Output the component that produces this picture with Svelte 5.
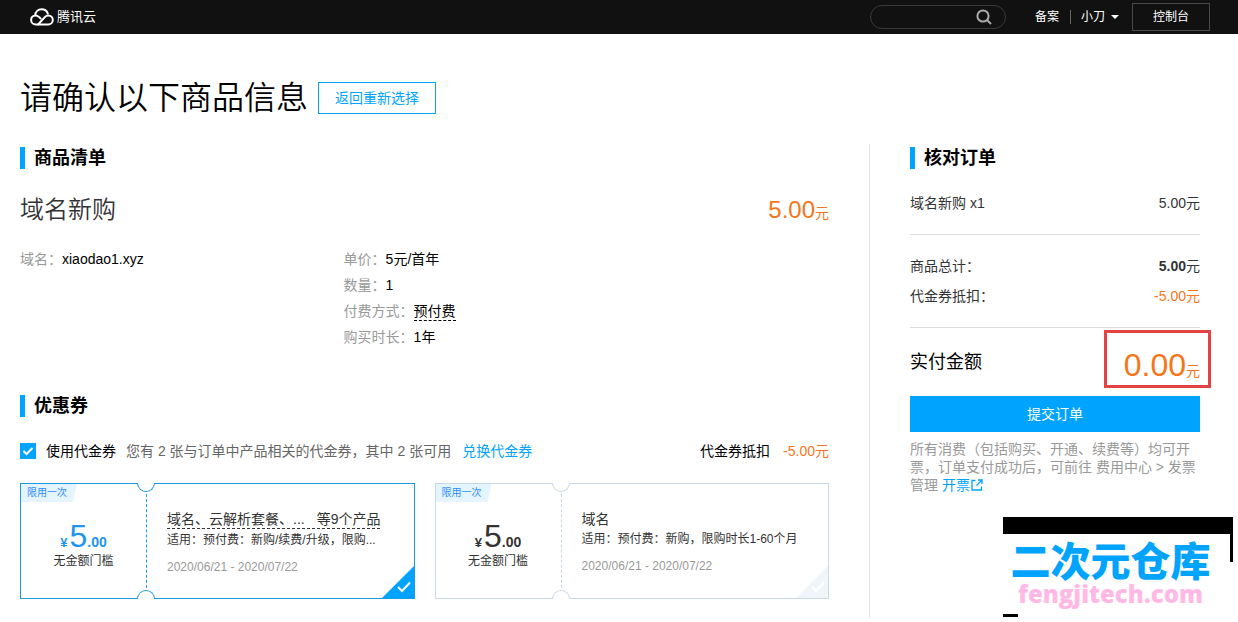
<script>
  let query = $state('');
  let useVoucher = $state(true);
  let selected = $state(0);

  const details = [
    { label: '单价', value: '5元/首年' },
    { label: '数量', value: '1' },
    { label: '付费方式', value: '预付费', hint: true },
    { label: '购买时长', value: '1年' },
  ];

  const coupons = [
    {
      names: '域名、云解析套餐、...',
      more: '等9个产品',
      scope: '适用：预付费：新购/续费/升级，限购...',
      dates: '2020/06/21 - 2020/07/22',
    },
    {
      names: '域名',
      scope: '适用：预付费：新购，限购时长1-60个月',
      dates: '2020/06/21 - 2020/07/22',
    },
  ];
</script>

<header class="topbar">
  <a class="logo" href="#home">
    <svg width="24" height="18" viewBox="0 0 24 18" fill="none" stroke="#fff" stroke-width="2" stroke-linecap="round" stroke-linejoin="round">
      <path d="M8.1 16.5 H5.8 C3 16.5 1.1 14.4 1.1 12 C1.1 9.5 3 7.5 5.4 7.5 C6.9 7.5 8 8 9.1 9.1 L10.6 10.5" />
      <path d="M5.3 7.2 C5.3 3.7 8.2 1.2 11.6 1.2 C14.6 1.2 17 3 17.8 5.6" />
      <path d="M8.1 16.5 H18.2 C20.8 16.5 22.8 14.4 22.8 12 C22.8 9.5 20.8 7.5 18.3 7.5 C16.9 7.5 15.8 8.1 14.8 9.1 L8.1 16.5" />
    </svg>
    <span>腾讯云</span>
  </a>
  <div class="search">
    <input type="text" aria-label="搜索" bind:value={query} />
    <button type="button" aria-label="搜索">
      <svg width="16" height="16" viewBox="0 0 16 16" fill="none" stroke="#aaa" stroke-width="2">
        <circle cx="7" cy="7" r="5.6" />
        <path d="M11 11 L15 15" />
      </svg>
    </button>
  </div>
  <a class="top-link" href="#beian">备案</a>
  <button type="button" class="user">小刀<span class="caret"></span></button>
  <a class="console" href="#console">控制台</a>
</header>

<div class="page">
  <div class="title-row">
    <h1>请确认以下商品信息</h1>
    <button type="button" class="back">返回重新选择</button>
  </div>

  <div class="columns">
    <main>
      <h2>商品清单</h2>
      <div class="product">
        <h3>域名新购</h3>
        <p class="price">5.00<small>元</small></p>
      </div>
      <div class="details">
        <p><span class="label">域名：</span>xiaodao1.xyz</p>
        <div>
          {#each details as item}
            <p>
              <span class="label">{item.label}：</span><span class:hint={item.hint}>{item.value}</span>
            </p>
          {/each}
        </div>
      </div>

      <h2>优惠券</h2>
      <div class="voucher-row">
        <label>
          <input type="checkbox" bind:checked={useVoucher} />
          使用代金券
        </label>
        <span class="voucher-tip">您有 2 张与订单中产品相关的代金券，其中 2 张可用</span>
        <a href="#exchange">兑换代金券</a>
        <p class="voucher-sum">代金券抵扣 <span class="orange">-5.00元</span></p>
      </div>
      <div class="coupons">
        {#each coupons as coupon, i}
          <button
            type="button"
            class="coupon"
            class:active={selected === i}
            aria-pressed={selected === i}
            onclick={() => (selected = i)}
          >
            <span class="tag">限用一次</span>
            <span class="amount">
              <span class="money"><b class="yen">¥</b><span class="big">5</span><b>.00</b></span>
              <span class="limit">无金额门槛</span>
            </span>
            <span class="info">
              {#if coupon.more}
                <span class="names multi"><span>{coupon.names}</span><span>{coupon.more}</span></span>
              {:else}
                <span class="names">{coupon.names}</span>
              {/if}
              <span class="scope">{coupon.scope}</span>
              <span class="dates">{coupon.dates}</span>
            </span>
            <span class="notch top"></span>
            <span class="notch bottom"></span>
            <svg class="corner" width="32" height="32" viewBox="0 0 32 32">
              <path class="corner-fill" d="M32 0 V32 H0 Z" />
              <path d="M16 21 L20 25 L28 16.5" fill="none" stroke="#fff" stroke-width="2" />
            </svg>
          </button>
        {/each}
      </div>
    </main>

    <aside>
      <h2>核对订单</h2>
      <dl class="lines first">
        <div><dt>域名新购 x1</dt><dd>5.00元</dd></div>
      </dl>
      <dl class="lines">
        <div><dt>商品总计：</dt><dd><b>5.00</b>元</dd></div>
        <div><dt>代金券抵扣：</dt><dd class="orange">-5.00元</dd></div>
      </dl>
      <div class="total">
        <span>实付金额</span>
        <span class="total-price">0.00<small>元</small></span>
      </div>
      <button type="button" class="submit">提交订单</button>
      <p class="note">
        所有消费（包括购买、开通、续费等）均可开票，订单支付成功后，可前往 费用中心 &gt; 发票管理
        <a href="#invoice">开票<svg width="12" height="12" viewBox="0 0 12 12" fill="none" stroke="currentColor" stroke-width="1.3">
            <path d="M4.5 1.5 H1 V11 H10.5 V7.5" />
            <path d="M7 1 H11 V5 M11 1 L5.5 6.5" />
          </svg></a>
      </p>
    </aside>
  </div>

  <div class="watermark">
    <span class="wm-name">二次元仓库</span>
    <span class="wm-site">fengjitech.com</span>
  </div>
</div>

<style>
  :global(body) {
    background: #fff;
    color: #000;
    font: 14px/20px "Liberation Sans", "Noto Sans CJK SC", sans-serif;
  }

  h1,
  h2,
  h3,
  p,
  dl,
  dd {
    margin: 0;
  }

  button,
  input {
    font: inherit;
    padding: 0;
    box-sizing: border-box;
  }

  button {
    cursor: pointer;
  }

  a {
    color: #00a4ff;
    text-decoration: none;
  }

  .orange {
    color: #f5761a;
  }

  /* Top bar */
  .topbar {
    display: flex;
    align-items: center;
    height: 34px;
    padding: 0 28px 0 30px;
    background: #111;
    color: #fff;
    font-size: 12px;
  }

  .logo {
    display: flex;
    align-items: center;
    gap: 3px;
    color: #fff;
    font-size: 13px;
  }

  .search {
    display: flex;
    align-items: center;
    box-sizing: border-box;
    width: 136px;
    height: 24px;
    margin-left: auto;
    padding: 0 13px;
    border: 1px solid #3a3a3a;
    border-radius: 12px;
  }

  .search input {
    flex: 1;
    min-width: 0;
    border: 0;
    outline: 0;
    background: none;
    color: #fff;
  }

  .search button {
    display: flex;
    border: 0;
    background: none;
  }

  .top-link {
    margin-left: 29px;
    padding-right: 11px;
    border-right: 1px solid #666;
    color: #fff;
    line-height: 14px;
  }

  .user {
    display: flex;
    align-items: center;
    gap: 6px;
    margin-left: 10px;
    border: 0;
    background: none;
    color: #fff;
  }

  .caret {
    border: 4px solid transparent;
    border-top-color: #fff;
    border-bottom: 0;
  }

  .console {
    box-sizing: border-box;
    width: 78px;
    height: 28px;
    margin-left: 13px;
    border: 1px solid #4a4a4a;
    color: #fff;
    line-height: 26px;
    text-align: center;
  }

  /* Page frame */
  .page {
    position: relative;
    padding: 40px 38px 4px 20px;
  }

  .title-row {
    display: flex;
    align-items: center;
    gap: 10px;
    height: 48px;
  }

  h1 {
    font-size: 32px;
    font-weight: 350;
    line-height: 50px;
  }

  .back {
    width: 118px;
    height: 32px;
    border: 1px solid #00a4ff;
    background: #fff;
    color: #00a4ff;
  }

  .columns {
    display: flex;
    margin-top: 22px;
  }

  main {
    flex: 1;
    min-width: 0;
    padding: 3px 40px 19px 0;
    border-right: 1px solid #e5e5e5;
  }

  aside {
    width: 290px;
    padding: 3px 0 0 40px;
  }

  h2 {
    padding-left: 9px;
    border-left: 5px solid #00a4ff;
    font-size: 18px;
    line-height: 22px;
  }

  /* Product */
  .product {
    display: flex;
    justify-content: space-between;
    margin-top: 21px;
    line-height: 40px;
  }

  h3 {
    color: #333;
    font-size: 24px;
    font-weight: 350;
  }

  .price {
    color: #f5761a;
    font-size: 24px;
  }

  small {
    font-size: 14px;
    line-height: 14px;
  }

  .details {
    display: grid;
    grid-template-columns: 2fr 3fr;
    margin: 16px 0 45px;
    line-height: 26px;
  }

  .label {
    color: #999;
  }

  .hint {
    padding-bottom: 1px;
    border-bottom: 1px dashed #000;
  }

  /* Vouchers */
  .voucher-row {
    display: flex;
    align-items: center;
    margin: 24px 0 22px;
  }

  .voucher-row label {
    display: flex;
    align-items: center;
    gap: 10px;
  }

  .voucher-row input {
    appearance: none;
    width: 16px;
    height: 16px;
    margin: 0;
    border: 1px solid #00a4ff;
  }

  .voucher-row input:checked {
    background: #00a4ff url("data:image/svg+xml,%3Csvg xmlns='http://www.w3.org/2000/svg' viewBox='0 0 14 14'%3E%3Cpath d='M2.5 7 L5.5 10 L11.5 4' fill='none' stroke='white' stroke-width='2'/%3E%3C/svg%3E");
  }

  .voucher-tip {
    margin: 0 11px 0 10px;
    color: #666;
  }

  .voucher-sum {
    display: flex;
    gap: 13px;
    margin-left: auto;
  }

  .coupons {
    display: grid;
    grid-template-columns: 1fr 1fr;
    gap: 20px;
  }

  .coupon {
    --line: #c8d9e6;
    position: relative;
    display: flex;
    min-width: 0;
    height: 116px;
    border: 1px solid var(--line);
    background: #fff;
    color: #333;
    font-size: 12px;
    text-align: left;
  }

  .coupon.active {
    --line: #1c9ae0;
  }

  .tag {
    position: absolute;
    top: 0;
    left: 0;
    width: 56px;
    padding-left: 6px;
    box-sizing: border-box;
    background: #e5f5ff;
    clip-path: polygon(0 0, 100% 0, 52px 100%, 0 100%);
    color: #2b8cff;
    font-size: 10px;
    line-height: 18px;
  }

  .amount {
    display: flex;
    flex-direction: column;
    align-items: center;
    flex: none;
    width: 126px;
    height: 100%;
    box-sizing: border-box;
    padding-top: 36px;
    border-right: 1px dashed var(--line);
  }

  .money {
    display: flex;
    align-items: baseline;
    font-size: 14px;
    line-height: 14px;
  }

  .active .money {
    color: #1e96ec;
  }

  .yen {
    margin-right: 2px;
    font-size: 13px;
  }

  .big {
    font-size: 32px;
    line-height: 32px;
  }

  .limit {
    line-height: 18px;
  }

  .info {
    display: flex;
    flex-direction: column;
    align-items: flex-start;
    justify-content: center;
    flex: 1;
    align-self: stretch;
    min-width: 0;
    padding: 4px 16px 0 20px;
  }

  .names {
    font-size: 14px;
    line-height: 18px;
  }

  .multi {
    display: flex;
    gap: 12px;
    border-bottom: 1px dashed #333;
  }

  .scope {
    line-height: 22px;
    white-space: nowrap;
  }

  .dates {
    margin-top: 6px;
    color: #999;
  }

  .notch {
    position: absolute;
    left: 116px;
    box-sizing: border-box;
    width: 18px;
    height: 9px;
    border: 1px solid var(--line);
    background: #fff;
  }

  .notch.top {
    top: -1px;
    border-top: 0;
    border-radius: 0 0 9px 9px;
  }

  .notch.bottom {
    bottom: -1px;
    border-bottom: 0;
    border-radius: 9px 9px 0 0;
  }

  .corner {
    position: absolute;
    right: 0;
    bottom: 0;
  }

  .corner-fill {
    fill: #f0f5f9;
  }

  .active .corner-fill {
    fill: #00a4ff;
  }

  /* Order summary */
  .lines {
    padding: 16px 0;
    border-bottom: 1px solid #ddd;
    color: #333;
    line-height: 30px;
  }

  .lines.first {
    padding-top: 19px;
  }

  .lines div {
    display: flex;
    justify-content: space-between;
  }

  .total {
    display: flex;
    align-items: center;
    justify-content: space-between;
    height: 68px;
    font-size: 18px;
  }

  .total-price {
    position: relative;
    padding-top: 6px;
    color: #f5761a;
    font-size: 32px;
    line-height: 36px;
  }

  /* Highlight frame round the amount due */
  .total-price::after {
    content: "";
    position: absolute;
    inset: -11px -11px -5px -20px;
    border: 3px solid #e34343;
  }

  .submit {
    display: block;
    width: 100%;
    height: 36px;
    border: 0;
    background: #00a4ff;
    color: #fff;
  }

  .note {
    margin-top: 8px;
    color: #999;
    line-height: 18px;
  }

  .note svg {
    margin-left: 1px;
    vertical-align: -1px;
  }

  /* Site stamp over the lower right corner */
  .watermark {
    position: absolute;
    right: 5px;
    bottom: 5px;
    display: flex;
    flex-direction: column;
    align-items: center;
    box-sizing: border-box;
    width: 230px;
    height: 100px;
    padding-right: 15px;
    border-top: 17px solid #000;
  }

  .watermark::before,
  .watermark::after {
    content: "";
    position: absolute;
    background: #000;
  }

  .watermark::before {
    top: 0;
    right: 0;
    width: 3px;
    height: 28px;
  }

  .watermark::after {
    bottom: 0;
    left: 0;
    width: 15px;
    height: 3px;
  }

  .wm-name {
    padding-top: 8px;
    color: #00a4ff;
    font-size: 40px;
    font-weight: 900;
    line-height: 40px;
  }

  .wm-site {
    color: #ffb9e4;
    font: 800 24px/24px "Open Sans", sans-serif;
  }
</style>
